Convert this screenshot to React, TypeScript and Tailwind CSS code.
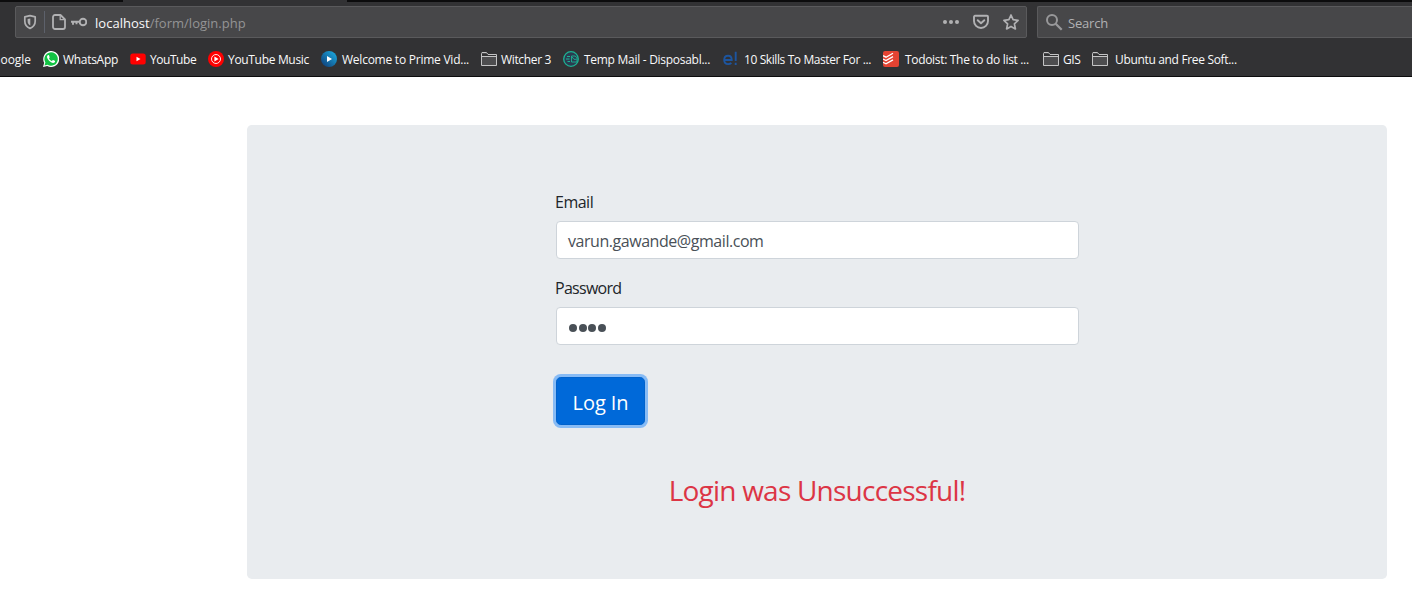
import type { ReactNode } from "react";

function Folder() {
  return (
    <svg width="16" height="16" viewBox="0 0 16 16" className="shrink-0">
      <path d="M.5 14.500v-12l.5-1h4.500l1.500 2h8.500v11z" fill="#4d4d4f" stroke="#c4c4c5" />
      <path d="M1 3h5l1 1h8v1.500H1z" fill="#323234" />
      <path d="M.5 5.500h15" stroke="#c4c4c5" fill="none" />
    </svg>
  );
}

function WhatsApp() {
  return (
    <svg width="16" height="16" viewBox="0 0 16 16" className="shrink-0">
      <path d="M0 16l1.200-4.200A8 8 0 1 1 4.200 14.900z" fill="#fff" />
      <path d="M1.500 14.500l.9-3A6.700 6.700 0 1 1 4.600 13.700z" fill="#12c344" />
      <path d="M5.300 3.900c-.5 0-1.300.8-1.300 1.900 0 2.600 3.600 6.100 6.100 6.100 1.100 0 2-.8 2-1.700 0-.3-.2-.4-2-1.200-.5-.2-.9 1-1.300 1-.7 0-2.700-1.900-2.700-2.500 0-.4.7-.8.600-1.200-.6-1.900-.7-2.400-1.400-2.400z" fill="#fff" />
    </svg>
  );
}

function YouTube() {
  return (
    <svg width="16" height="16" viewBox="0 0 16 16" className="shrink-0">
      <rect x=".3" y="2.500" width="15.400" height="11" rx="2.500" fill="#f00" />
      <path d="M6.500 5.700v4.600l4-2.300z" fill="#fff" />
    </svg>
  );
}

function YouTubeMusic() {
  return (
    <svg width="16" height="16" viewBox="0 0 16 16" className="shrink-0">
      <circle cx="8" cy="8" r="8" fill="#f00" />
      <circle cx="8" cy="8" r="4.500" fill="none" stroke="#fff" strokeWidth=".9" />
      <path d="M6.400 5.400v5.200l4.200-2.600z" fill="#fff" />
    </svg>
  );
}

function Prime() {
  return (
    <svg width="16" height="16" viewBox="0 0 16 16" className="shrink-0">
      <defs>
        <linearGradient id="prime" x1="0" y1="1" x2="1" y2="0">
          <stop offset="0.100" stopColor="#10427c" />
          <stop offset="0.900" stopColor="#1ba7dd" />
        </linearGradient>
      </defs>
      <circle cx="8" cy="8" r="8" fill="url(#prime)" />
      <path d="M6 4.900v6.200l5-3.100z" fill="#fff" />
    </svg>
  );
}

function TempMail() {
  return (
    <svg width="16" height="16" viewBox="0 0 16 16" className="shrink-0" fill="none" stroke="#1cb394">
      <circle cx="8" cy="8" r="7.300" fill="#2b3c50" strokeWidth="1.300" />
      <path d="M4 5.500h3M3 8h3.500M4.500 10.500h2.500" />
      <path d="M8.500 5h3.500l2 1.700v4.300H8.500zM9 6l2 2.300h2.500" strokeWidth=".9" />
    </svg>
  );
}

function Edureka() {
  return (
    <svg width="16" height="16" viewBox="0 0 16 16" className="shrink-0" fill="none" stroke="#1d559f" strokeWidth="1.900">
      <path d="M1.300 9h7.400c0-2.800-1.300-4.200-3.600-4.200C2.900 4.800 1.200 6.400 1.200 9c0 2.500 1.500 4.100 4 4.100 1.300 0 2.300-.3 3.200-1" />
      <path d="M12.700.7v9.300M12.700 11.700v2.300" />
    </svg>
  );
}

function Todoist() {
  return (
    <svg width="16" height="16" viewBox="0 0 16 16" className="shrink-0">
      <rect width="16" height="16" rx="2" fill="#e44332" />
      <path d="M0 4.700l3 1.500 7-3.900M0 8l3 1.500 7-3.900M0 11.300l3 1.500 7-3.900" stroke="#fff" strokeWidth="1.300" fill="none" />
    </svg>
  );
}

function Bookmark({ icon, width, gap, children }: { icon: ReactNode; width: string; gap: string; children: ReactNode }) {
  return (
    <a className={`flex h-full shrink-0 items-center ${width} ${gap}`}>
      {icon}
      <span className="whitespace-pre pt-0.5">{children}</span>
    </a>
  );
}

function Toolbar() {
  return (
    <div className="flex h-9 shrink-0 items-end gap-2.5 pl-[15px]">
      <div className="flex h-8 w-[1012px] shrink-0 items-center rounded-[2px] border border-[#5a5a5c] bg-[#474749] pl-[6px] text-[13px]">
        <svg width="16" height="16" viewBox="0 0 16 16" fill="none" stroke="#b1b1b3" strokeWidth="1.700">
          <path d="M8 1.700l5.200 1.200v4.200c0 3.800-2 6-5.200 7.300C4.800 13.100 2.800 10.900 2.800 7.100V2.900z" strokeLinejoin="round" />
          <path d="M8.300 4.500v7C6.500 10.600 5.600 9.200 5.600 7V5z" fill="#b1b1b3" stroke="none" />
        </svg>
        <div className="ml-[6px] h-[22px] w-px bg-[#5d616b]" />
        <svg width="16" height="16" viewBox="0 0 16 16" fill="none" stroke="#b1b1b3" strokeWidth="1.800" className="ml-[6px]">
          <path d="M4 1h5.500l4.500 4.500V13a2 2 0 0 1-2 2H4a2 2 0 0 1-2-2V3a2 2 0 0 1 2-2z" strokeLinejoin="round" />
          <path d="M9.200 1.500v4.200h4.300" strokeWidth="1.300" />
        </svg>
        <svg width="16" height="16" viewBox="0 0 16 16" fill="none" stroke="#b1b1b3" strokeWidth="1.900" className="ml-[4px]">
          <circle cx="12" cy="8" r="3.300" />
          <path d="M0 7.700h9M2 8v2.700M5.500 8v2.300" />
        </svg>
        <span className="ml-[8px] pt-[3px] tracking-[0.020px] text-[#f9f9fa]">localhost</span>
        <span className="pt-[3px] tracking-[0.020px] text-[#949495]">/form/login.php</span>
        <div className="ml-auto flex items-center gap-3.5 pr-[7px]">
          <svg width="16" height="16" viewBox="0 0 16 16" fill="#b1b1b3">
            <circle cx="2" cy="8" r="2" /><circle cx="8" cy="8" r="2" /><circle cx="14" cy="8" r="2" />
          </svg>
          <svg width="16" height="16" viewBox="0 0 16 16" fill="none" stroke="#b1b1b3" strokeWidth="1.900" strokeLinejoin="round" strokeLinecap="round">
            <path d="M2 1.800h12a1 1 0 0 1 1 1V7a7 7 0 0 1-14 0V2.800a1 1 0 0 1 1-1z" />
            <path d="M4.700 6.200L8 9.300l3.300-3.100" />
          </svg>
          <svg width="16" height="16" viewBox="0 0 16 16" fill="none" stroke="#b1b1b3" strokeWidth="1.700" strokeLinejoin="round">
            <path d="M8 1l2.100 4.700 5 .6-3.700 3.500 1 5.100L8 12.400l-4.400 2.500 1-5.100L.9 6.300l5-.6z" />
          </svg>
        </div>
      </div>
      <div className="flex h-8 min-w-0 flex-1 items-center rounded-l-[2px] border border-r-0 border-[#5a5a5c] bg-[#474749] pl-2 text-[13px] text-[#b1b1b3]">
        <svg width="17" height="17" viewBox="0 0 17 17" fill="none" stroke="#98989a" strokeWidth="2" className="shrink-0">
          <circle cx="6" cy="6" r="5" />
          <path d="M9.700 9.700l6 6" strokeWidth="2.300" />
        </svg>
        <span className="ml-[5px] pt-[3px] tracking-[-0.200px]">Search</span>
      </div>
    </div>
  );
}

function Bookmarks() {
  return (
    <nav className="flex h-[38px] shrink-0 items-center pb-px pt-[5px] text-[12px] text-[#f9f9fa]">
      <div className="flex w-[43px] shrink-0 justify-end overflow-hidden pr-3 pt-0.5 tracking-[-0.050px]">Google</div>
      <Bookmark icon={<WhatsApp />} width="w-[87px]" gap="gap-1"><span className="tracking-[-0.300px]">WhatsApp</span></Bookmark>
      <Bookmark icon={<YouTube />} width="w-[78px]" gap="gap-1"><span className="tracking-[-0.450px]">YouTube</span></Bookmark>
      <Bookmark icon={<YouTubeMusic />} width="w-[113px]" gap="gap-1"><span className="tracking-[-0.320px]">YouTube Music</span></Bookmark>
      <Bookmark icon={<Prime />} width="w-[160px]" gap="gap-[5px]"><span className="tracking-[-0.240px]">Welcome to Prime Vid...</span></Bookmark>
      <Bookmark icon={<Folder />} width="w-[82px]" gap="gap-1"><span className="tracking-[-0.350px]">Witcher 3</span></Bookmark>
      <Bookmark icon={<TempMail />} width="w-[160px]" gap="gap-[5px]"><span className="tracking-[-0.280px]">Temp Mail - Disposabl...</span></Bookmark>
      <Bookmark icon={<Edureka />} width="w-[160px]" gap="gap-[5px]"><span className="tracking-[-0.400px]">10 Skills To Master For ...</span></Bookmark>
      <Bookmark icon={<Todoist />} width="w-[160px]" gap="gap-1.5"><span className="tracking-[-0.320px]">Todoist: The to do list ...</span></Bookmark>
      <Bookmark icon={<Folder />} width="w-[49px]" gap="gap-1"><span className="tracking-[-0.450px]">GIS</span></Bookmark>
      <Bookmark icon={<Folder />} width="w-[160px]" gap="gap-[7px]"><span className="tracking-[-0.330px]">Ubuntu and Free Soft...</span></Bookmark>
    </nav>
  );
}

export default function App() {
  return (
    <div className="flex h-[601px] w-full flex-col overflow-hidden bg-white font-['Open_Sans','Noto_Sans',sans-serif]">
      <header className="flex h-[77px] shrink-0 flex-col border-b border-[#0c0c0d] bg-[#323234]">
        <div className="flex h-0.5 shrink-0 justify-between">
          <div className="w-[123px] bg-[#0c0c0d]" />
          <div className="w-[1065px] bg-[#0c0c0d]" />
        </div>
        <Toolbar />
        <Bookmarks />
      </header>
      <main className="ml-[247px] mt-12 h-[454px] w-[1140px] rounded-[4.800px] bg-[#e9ecef] pt-16">
        <form className="ml-[309px] flex w-[523px] flex-col text-base text-[#212529]">
          <label className="-ml-px mb-2 h-6 pt-px leading-6 tracking-[-0.500px]">Email</label>
          <div className="flex h-[38px] items-center rounded border border-[#ced4da] bg-white pl-[11px] pt-0.5 tracking-[-0.450px] text-[#495057]">varun.gawande@gmail.com</div>
          <label className="-ml-px mb-2 mt-4 h-6 pt-px leading-6 tracking-[-0.720px]">Password</label>
          <div className="flex h-[38px] items-center gap-[1.700px] rounded border border-[#ced4da] bg-white pl-[12px] pt-1">
            {[0, 1, 2, 3].map((i) => (
              <span key={i} className="size-2 rounded-full bg-[#495057]" />
            ))}
          </div>
          <button type="button" className="mt-8 flex h-12 w-[89px] items-center justify-center rounded-[4.800px] border border-[#0062cc] bg-[#0069d9] pt-1 text-xl tracking-[-0.100px] text-white shadow-[0_0_0_3px_#87bbf5]">Log In</button>
        </form>
        <p className="mt-[48px] text-center text-[28px] leading-[34px] tracking-[-0.770px] text-[#dc3545]">Login was Unsuccessful!</p>
      </main>
    </div>
  );
}
